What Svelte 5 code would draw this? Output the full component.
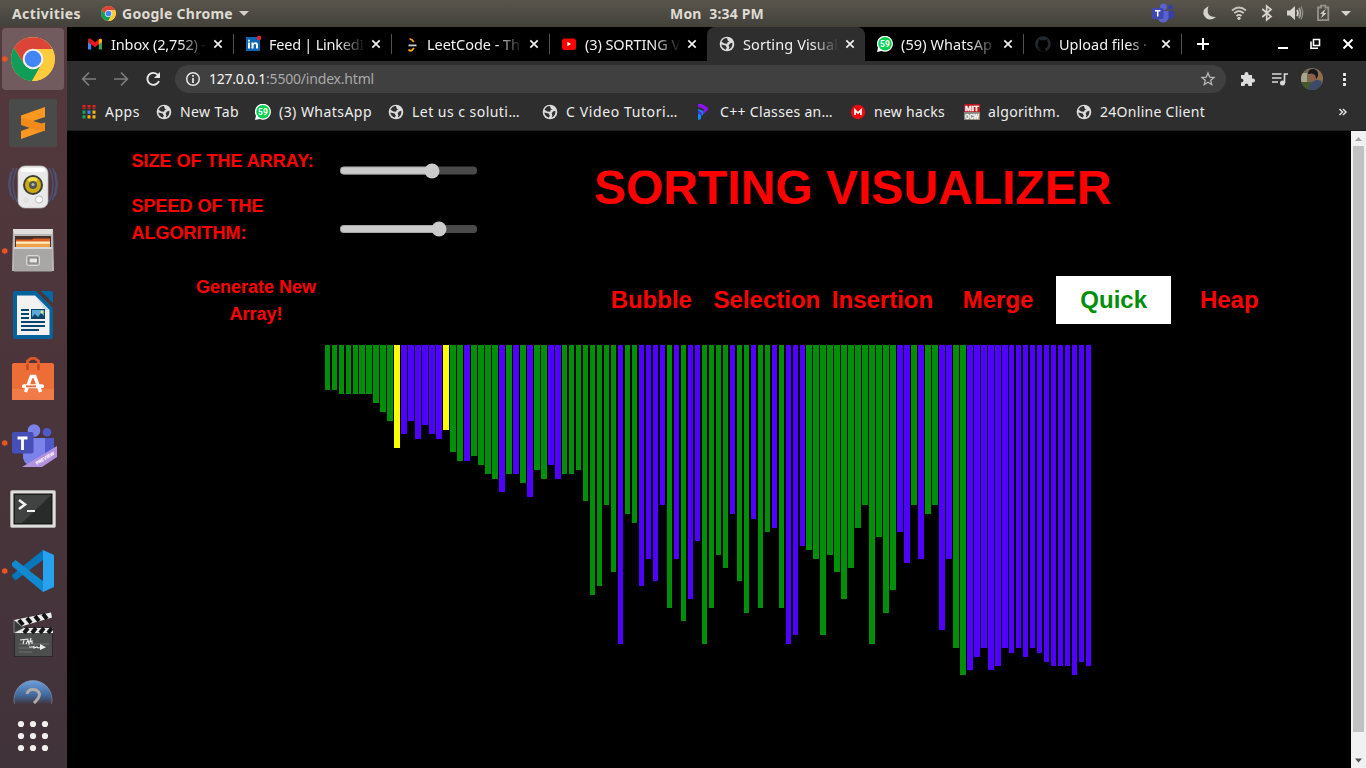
<script>
  // Spreads a label evenly over a given width.
  function fit(node, width) {
    node.style.letterSpacing = '0px';
    const natural = node.getBoundingClientRect().width;
    const count = node.textContent.length;
    node.style.letterSpacing = (width - natural) / count + 'px';
  }

  const tabs = [
    { icon: 'gmail', title: 'Inbox (2,752) -', width: 95 },
    { icon: 'linkedin', title: 'Feed | LinkedI', width: 95 },
    { icon: 'leetcode', title: 'LeetCode - Th', width: 93 },
    { icon: 'youtube', title: '(3) SORTING V', width: 95 },
    { icon: 'globe', title: 'Sorting Visual', width: 95, active: true },
    { icon: 'whatsapp', title: '(59) WhatsAp', width: 91 },
    { icon: 'github', title: 'Upload files ·', width: 88 }
  ];

  const bookmarks = [
    { icon: 'apps', title: 'Apps', width: 35, cell: 75 },
    { icon: 'globe', title: 'New Tab', width: 59, cell: 99 },
    { icon: 'whatsapp', title: '(3) WhatsApp', width: 93, cell: 133 },
    { icon: 'globe', title: 'Let us c soluti…', width: 108, cell: 154 },
    { icon: 'globe', title: 'C Video Tutori…', width: 112, cell: 154 },
    { icon: 'cpp', title: 'C++ Classes an…', width: 113, cell: 154 },
    { icon: 'mega', title: 'new hacks', width: 71, cell: 114 },
    { icon: 'mit', title: 'algorithm.', width: 72, cell: 112 },
    { icon: 'globe', title: '24Online Client', width: 105, cell: 150 }
  ];

  const dock = ['chrome', 'sublime', 'speaker', 'files', 'writer', 'software', 'teams', 'terminal', 'code', 'clapper'];
  const running = ['chrome', 'files', 'teams', 'code'];
  const algorithms = ['Bubble', 'Selection', 'Insertion', 'Merge', 'Quick', 'Heap'];

  const data =
    'g45 g45 g49 g49 g49 g49 g49 g58 g67 g76 y103 b89 b76 b94 b80 b89 b94 y85 g107 g116 b116 g111 g120 g129 g134 b147 g129 b129 g138 b152 g125 g134 b120 b134 ' +
    'g129 g129 g125 g156 g250 g241 g160 g227 b299 g169 g178 b241 b214 b236 b160 g263 b214 g276 b254 b196 g299 g263 g210 g223 b169 g236 g268 b174 g263 g187 b183 g263 b299 b290 b201 ' +
    'g205 g214 g290 g210 g227 g254 g223 g183 g160 g299 g192 g268 g245 b187 b218 g160 b214 g169 g160 b285 b214 g303 g330 ' +
    'b325 b312 b303 b325 b321 b303 b308 b303 b312 b303 b308 b317 b321 b321 b321 b330 b317 b321';
  const bars = data.split(' ').map((s) => ({ kind: s[0], height: +s.slice(1) }));
</script>

{#snippet chromeLogo(size)}
  <svg width={size} height={size} viewBox="-22 -22 44 44">
    <circle r="22" fill="#fdc93a" />
    <path d="M-19 -11A22 22 0 0 1 19.3 -10H0L-9 5Z" fill="#db4437" />
    <path d="M-19 -11A22 22 0 0 0 -1 22L9 5.5L0 10L-9 5Z" fill="#0f9d58" />
    <path d="M19.3 -10H0L10 2L-1 22A22 22 0 0 0 19.3 -10Z" fill="#fecb3d" />
    <circle r="10.3" fill="#f1f1f1" />
    <circle r="8.3" fill="#4285f4" />
  </svg>
{/snippet}

{#snippet icon(name)}
  {#if name === 'gmail'}
    <svg width="16" height="16" viewBox="0 0 16 16">
      <path d="M1 4.5V13.5H4.2V7Z" fill="#4285f4" />
      <path d="M15 4.5V13.5H11.8V7Z" fill="#34a853" />
      <path d="M1 4.5Q1 2.2 3.5 2.8L8 6.2 12.5 2.8Q15 2.2 15 4.5V6L8 11.2 1 6Z" fill="#ea1520" />
      <path d="M11.8 3.3Q15 1.5 15 4.5V6L11.8 8.4Z" fill="#fbbc04" />
      <path d="M1 5V3.8Q1.5 2.4 3 2.6L4.2 3.5V8.4L1 6Z" fill="#c5221f" />
    </svg>
  {:else if name === 'linkedin'}
    <svg width="16" height="16" viewBox="0 0 16 16">
      <path d="M1 1h14v14H1z" fill="#0a66b5" />
      <path d="M3 6.5h2v6H3zM3 3.7h2v1.8H3zM6.5 6.5h2v1Q9.2 6.3 10.8 6.3 13 6.3 13 9v3.5h-2V9.3Q11 8 10 8T8.6 9.3v3.2H6.5z" fill="#fff" />
      <circle cx="14" cy="2" r="2.2" fill="#ee1c25" />
    </svg>
  {:else if name === 'leetcode'}
    <svg width="16" height="16" viewBox="0 0 16 16" fill="none" stroke-width="1.8">
      <path d="M6.500 3.200Q8.500 2.600 10.800 6" stroke="#ffa116" />
      <path d="M5.500 13.500Q7 15.500 9 14.200L11 12" stroke="#ffa116" />
      <path d="M5.500 9.400h8" stroke="#ccc" />
    </svg>
  {:else if name === 'youtube'}
    <svg width="16" height="16" viewBox="0 0 16 16">
      <rect x="1" y="2.500" width="14" height="11.500" rx="2.500" fill="#f00" />
      <path d="M6.3 5.8V10.2L10 8Z" fill="#fff" />
    </svg>
  {:else if name === 'globe'}
    <svg width="16" height="16" viewBox="0 0 16 16">
      <circle cx="8" cy="8" r="7.300" fill="#dedede" />
      <path d="M8 2Q4 2.300 2.500 5.800L5.300 7.400 8.200 7.800 8.600 6.100 10.600 5.500 8.800 4.700Z" fill="#303030" />
      <path d="M2.300 8.600 6.700 9.600 7.800 11.700 6.800 13.700Q2.800 12.600 2.300 8.600ZM13.400 6.800 11 7.600 9.600 9.400 10.400 11.300 9.600 13.500Q13.800 12 13.400 6.800Z" fill="#303030" />
    </svg>
  {:else if name === 'whatsapp'}
    <svg width="16" height="16" viewBox="0 0 16 16">
      <path d="M0 16 1 11.8A8 8 0 1 1 4.5 15Z" fill="#fff" />
      <circle cx="8" cy="7.8" r="6.8" fill="#07d14f" />
      <text x="8" y="11" text-anchor="middle" font-family="Roboto, sans-serif" font-size="8.500" font-weight="700" fill="#fff">59</text>
    </svg>
  {:else if name === 'github'}
    <svg width="16" height="16" viewBox="0 0 16 16">
      <circle cx="8" cy="8" r="7.8" fill="#24292e" />
      <path d="M5.5 15.5V12.5Q2.8 11.5 2.8 8 2.8 6.5 3.8 5.6L3.7 3.2 6 4.2H10L12.3 3.2 12.2 5.6Q13.2 6.5 13.2 8 13.2 11.5 10.5 12.2V15.5Z" fill="#000" />
      <path d="M5.6 13.5Q3.8 13.8 3 11.8" stroke="#000" fill="none" />
    </svg>
  {:else if name === 'apps'}
    <svg width="16" height="16" viewBox="0 0 16 16">
      <path d="M1.5 1h3v4h-3zM6.5 1h3v4h-3z M11.5 1h3v4h-3z" fill="#e8231c" />
      <path d="M1.5 6.5h3v3.3h-3zM1.5 11.2h3v3.3h-3z" fill="#1da45c" />
      <path d="M6.5 6.5h3v3.3h-3z" fill="#4285f4" />
      <path d="M6.5 11.2h3v3.3h-3zM11.5 6.5h3v3.3h-3zM11.5 11.2h3v3.3h-3z" fill="#fbaf17" />
      <path d="M1 3.8h14" stroke="#2e2e2e" stroke-width=".8" />
    </svg>
  {:else if name === 'cpp'}
    <svg width="16" height="16" viewBox="0 0 16 16">
      <path d="M2 0H6L12 4V6L6 11V8L8.500 5.500 2 2.500Z" fill="#8b13f5" />
      <path d="M2 5 7 7V11L5 11.500V15L2 16Z" fill="#0b8df5" />
      <path d="M2 6 6 9V11.500L2 10Z" fill="#3a39d8" />
    </svg>
  {:else if name === 'mega'}
    <svg width="16" height="16" viewBox="0 0 16 16">
      <circle cx="8" cy="8" r="7.2" fill="#f00b12" />
      <path d="M5 11V6L8 9 11 6V11" fill="none" stroke="#fff" stroke-width="1.7" />
    </svg>
  {:else if name === 'mit'}
    <svg width="16" height="16" viewBox="0 0 16 16" font-family="Liberation Sans, sans-serif" font-weight="700" fill="#fff">
      <path d="M0 0h16v8H0z" fill="#b9151b" />
      <path d="M0 8h16v8H0z" fill="#89857b" />
      <text x="1" y="7" font-size="7.500" textLength="14" lengthAdjust="spacingAndGlyphs" stroke="#fff" stroke-width=".3">MIT</text>
      <text x="1" y="15" font-size="7" textLength="14" lengthAdjust="spacingAndGlyphs" stroke="#fff" stroke-width=".3">OCW</text>
    </svg>
  {/if}
{/snippet}

{#snippet dockArt(name)}
  {#if name === 'chrome'}
    <rect x="2" y="28" width="62" height="62" rx="4" fill="#725b5f" />
    <svg x="11" y="37" width="44" height="44">{@render chromeLogo(44)}</svg>
  {:else if name === 'sublime'}
    <rect x="9" y="99" width="48" height="48" rx="2" fill="#494b4b" />
    <path d="M45 107 21 115.500V125L45 117Z" fill="#ff9820" />
    <path d="M21 131 45 122.500V130.500L21 139Z" fill="#ff9820" />
    <path d="M21 117.500 45 124.500V131L36 130 21 125Z" fill="#f28a1a" />
  {:else if name === 'speaker'}
    <g fill="none" stroke="#4c5b85" stroke-width="1.500" opacity=".75">
      <path d="M17 168Q9 184 17 202M13.500 168Q6 184 13.500 200M11 172Q7 184 11 196M49 168Q57 184 49 202M52.500 168Q60 184 52.500 200M55 172Q59 184 55 196" />
    </g>
    <rect x="18" y="166" width="30" height="42" rx="7" fill="#e9e9e9" stroke="#bbb" stroke-width=".7" />
    <rect x="21" y="168" width="24" height="4" rx="2" fill="#fff" />
    <circle cx="33" cy="185" r="10" fill="#3e3e38" />
    <circle cx="33" cy="185" r="8" fill="#c9ab10" />
    <path d="M33 185 27 179.5A8 8 0 0 1 38 179Z" fill="#f0db49" />
    <circle cx="33" cy="185" r="4" fill="#535352" />
    <circle cx="33" cy="184.5" r="1.6" fill="#bbb" />
    <circle cx="39" cy="199.5" r="3.6" fill="#fff" stroke="#bbb" />
    <circle cx="26" cy="200" r="2" fill="none" stroke="#d9d9d9" />
  {:else if name === 'files'}
    <path d="M13 229H53L54 271H12Z" fill="#b9b8b6" />
    <path d="M13 229H53L52 234H14Z" fill="#dfdedc" />
    <path d="M15 236H51V247H15Z" fill="#46312b" />
    <path d="M16 241V239.500H32L33.500 238.500H50V248H16Z" fill="#dc6024" />
    <path d="M16 241.500H50V244H16Z" fill="#fff0c2" />
    <path d="M16 243.800H50V247H16Z" fill="#f0a048" />
    <path d="M14 247H52V271.5H14Z" fill="#a8a7a5" />
    <path d="M14 247H52V249H14Z" fill="#d9d8d6" />
    <rect x="26.5" y="255.500" width="13" height="10" rx="2" fill="#aaa" stroke="#dadada" />
    <rect x="29" y="258" width="8.5" height="5" fill="#e5e5e5" stroke="#666" stroke-width=".8" />
  {:else if name === 'writer'}
    <path d="M15 291H36L53 308V337Q53 339 51 339H15Q13 339 13 337V293Q13 291 15 291Z" fill="#04639b" />
    <path d="M41 291H51Q53 291 53 293V303Z" fill="#0369a3" />
    <path d="M17 295.5H35L49.5 310V335H17Z" fill="#f2f2f2" />
    <path d="M35 295.5 49.5 310H45Z" fill="#c7dce8" />
    <path d="M21 310H29M21 314H29M21 318H29M21 322H45M21 326H45M21 330H39" stroke="#08476d" stroke-width="1.8" />
    <path d="M31 309H45V319H31Z" fill="#0d4568" />
    <path d="M32 310H44V316L41 313 38 317 35 314 32 317Z" fill="#59aadb" />
    <circle cx="42" cy="312" r="1.5" fill="#fbe36b" />
  {:else if name === 'software'}
    <path d="M27.5 370V361L31 358.3H35L38.5 361V370" fill="none" stroke="#db5928" stroke-width="2.8" />
    <path d="M12 364 14 363H52L54 364V400H12Z" fill="#ec6d35" />
    <path d="M12 389H54V400H12Z" fill="#f17c48" />
    <path d="M27.5 364V370M38.5 364V370" stroke="#c94b1d" stroke-width="2.6" />
    <path d="M25.5 392 31.2 376.5H34.8L40.5 392" fill="none" stroke="#fff" stroke-width="3.4" />
    <path d="M24 386.3H42" stroke="#fff" stroke-width="4" stroke-linecap="round" />
    <path d="M26 386.3H36" stroke="#ec6d35" stroke-width="1.9" />
  {:else if name === 'teams'}
    <circle cx="34" cy="430.500" r="6.300" fill="#7b83eb" />
    <circle cx="47" cy="432.3" r="4.3" fill="#5059c9" />
    <path d="M43 438H54V451Q50 460 43 456Z" fill="#5059c9" />
    <path d="M23 438H45V456Q43 466 34 466 25 466 23 458Z" fill="#7b83eb" />
    <rect x="12" y="432" width="21.5" height="21.5" rx="1.8" fill="#464eb8" />
    <path d="M17.5 438H27.5M22.5 438V450" stroke="#fff" stroke-width="2.8" />
    <path d="M22 467 57 446V457L42 467Z" fill="#b292e0" />
    <text transform="translate(37 465) rotate(-31)" font-family="Inter, sans-serif" font-size="4.6" font-weight="800" fill="#fff" textLength="21">PREVIEW</text>
  {:else if name === 'terminal'}
    <rect x="10.5" y="490.5" width="45" height="37" rx="1.5" fill="#dededc" stroke="#aaa" />
    <rect x="14" y="494" width="38" height="30" fill="#292b2b" stroke="#111" />
    <path d="M15 495H51L22 523H15Z" fill="#414342" />
    <path d="M19 500 25 504.5 19 509" fill="none" stroke="#f1f1ef" stroke-width="2.6" />
    <path d="M27 511H35" stroke="#f1f1ef" stroke-width="2" />
  {:else if name === 'code'}
    <path d="M12 576.500 15.500 580.500 43 560V550L12 575Z" fill="#0876bb" />
    <path d="M12 563 15.5 560 43 581V592L12 566Z" fill="#1189cf" />
    <path d="M43 550 54 555V587L43 592Z" fill="#26a2ee" />
    <path d="M43 562 30 571 43 580.500Z" fill="#49343b" />
  {:else if name === 'clapper'}
    <path d="M14 620 51 612.500 52 617.500 16 628Z" fill="#ededed" />
    <path d="M19 620 23 625M27 618 31 623M35 616 39 621M43 614 47 619" stroke="#111" stroke-width="4" />
    <path d="M14.500 628H52.500V656.500H14.500Z" fill="#4c4e4d" stroke="#292b2b" />
    <path d="M15 628H53V633H15Z" fill="#eee" />
    <path d="M28 628 24 633M36 628 32 633M44 628 40 633M52 628 48 633" stroke="#171717" stroke-width="4" />
    <path d="M14 620V633L24 628Z" fill="#383a3a" stroke="#aaa" stroke-width=".6" />
    <path d="M19 644H49M19 648H35M19 652H32" stroke="#777" stroke-width=".8" />
    <path d="M20 640 28 639M24 640 23 644M26 644 28 640 29 644 31 638 30 642 32 641 32 644M29 647H33L34 646.500V648L37 647 38 648 44 647" stroke="#ededed" stroke-width="1.100" fill="none" />
    <path d="M40 644V650L46 647.200Z" fill="#ededed" />
  {/if}
{/snippet}

<div class="desktop">
  <header class="panel">
    <span class="activities"><b use:fit={69}>Activities</b></span>
    <span class="app-menu">
      {@render chromeLogo(15)}
      <b use:fit={111}>Google Chrome</b>
      <svg width="10" height="5" viewBox="0 0 10 5"><path d="M0 0H10L5 5Z" fill="#d5d1ca" /></svg>
    </span>
    <span class="clock"><b use:fit={94}>Mon&nbsp; 3:34 PM</b></span>
    <svg class="tray" width="216" height="27" viewBox="1150 0 216 27">
      <circle cx="1163.500" cy="6.800" r="3.400" fill="#5b62cf" />
      <circle cx="1170.500" cy="7.300" r="2.500" fill="#3840a7" />
      <path d="M1168 11H1174V17L1171 19H1168Z" fill="#373fa6" />
      <path d="M1158 11H1168.500V18Q1167 22.500 1163 22.500T1158 18Z" fill="#5b62cf" />
      <rect x="1152" y="8" width="11.500" height="11" rx="1" fill="#3f47b2" />
      <path d="M1155 10.800H1160.400M1157.700 10.800V16.500" stroke="#fff" stroke-width="1.500" />
      <path d="M1208.500 6Q1200 11 1205 17 1209.500 22 1216 17 1209 17 1207.800 12.500 1207.300 9 1208.500 6Z" fill="#d6d3cc" />
      <g fill="none" stroke="#d6d3cc" stroke-width="1.700">
        <path d="M1232 10.500Q1239 4.500 1246 10.500" stroke="#c5c2bc" />
        <path d="M1234.300 13.200Q1239 9.200 1243.700 13.200M1236.500 16Q1239 13.700 1241.500 16" />
        <path d="M1262.300 9 1271 16.500 1266.700 20V6L1271 9.500 1262.300 17" />
        <path d="M1297 10Q1299 13 1297 16" />
        <path d="M1299 8Q1302 13 1299 18" stroke="#aaa7a1" />
        <path d="M1301 6.500Q1304.500 13 1301 19.500" stroke="#8e8b84" stroke-width="1.300" />
      </g>
      <circle cx="1239" cy="18.300" r="1.600" fill="#d6d3cc" />
      <path d="M1287 10.500H1290L1295 6V20L1290 15.500H1287Z" fill="#d6d3cc" />
      <path d="M1318 7.500H1321V5.700H1325.500V7.500H1328.300V20.200H1318Z" fill="none" stroke="#97938c" stroke-width="1.800" />
      <path d="M1325.800 8.700 1320 13.800H1322.700L1321 18.300 1326.500 13H1323.700Z" fill="#d6d3cc" />
      <path d="M1341 11H1351L1346 16Z" fill="#d6d3cc" />
    </svg>
  </header>

  <div class="work">
    <nav class="dock">
      {#each dock as name, i}
        <svg class="dock-item" width="67" height="64" viewBox="0 {27 + 64 * i} 67 64">
          {@render dockArt(name)}
          {#if running.includes(name)}<circle cx="4.8" cy={59 + 64 * i} r="2.8" fill="#e95420" />{/if}
        </svg>
      {/each}
      <svg width="67" height="37" viewBox="0 667 67 37">
        <defs>
          <linearGradient id="help" x1="0" y1="0" x2="0" y2="1">
            <stop offset="0" stop-color="#6ba0db" />
            <stop offset=".4" stop-color="#3f6698" />
            <stop offset=".62" stop-color="#44343b" />
          </linearGradient>
        </defs>
        <circle cx="33" cy="699.500" r="19" fill="url(#help)" stroke="#b9c7d6" stroke-opacity=".35" />
        <path d="M27 694Q28 689.500 33 689.500T39.500 694Q39.500 698 34 703" fill="none" stroke="#b2aaa6" stroke-width="3" />
      </svg>
      <svg width="67" height="64" viewBox="0 704 67 64" fill="#f2f0ef">
        {#each [724, 736, 748] as y}
          {#each [21, 33, 45] as x}<circle cx={x} cy={y} r="3.100" />{/each}
        {/each}
      </svg>
    </nav>

    <main class="browser">
      <div class="tabs">
        {#each tabs as tab}
          <div class="tab" class:active={tab.active}>
            {@render icon(tab.icon)}
            <span class="tab-title"><span class="label" use:fit={tab.width}>{tab.title}</span></span>
            <svg class="close" width="16" height="16" viewBox="0 0 16 16"><path d="M4.300 4.300 11.700 11.700M11.700 4.300 4.300 11.700" stroke="#f0f0f0" stroke-width="1.700" /></svg>
          </div>
        {/each}
        <svg class="new-tab" width="34" height="34" viewBox="1181 27 34 34"><path d="M1181.500 34V54" stroke="#505050" /><path d="M1197 44H1209M1203 38V50" stroke="#fff" stroke-width="2" /></svg>
        <svg class="window-buttons" width="96" height="34" viewBox="1270 27 96 34" fill="none" stroke="#fff">
          <path d="M1278 48H1288" stroke-width="2" />
          <path d="M1313.500 39.500H1319.500V45.500H1313.500ZM1311 41.500V48.200H1318" stroke-width="1.600" />
          <path d="M1343.500 39.500 1352.500 48.500M1352.500 39.500 1343.500 48.500" stroke-width="2" />
        </svg>
      </div>

      <div class="toolbar">
        <svg width="108" height="36" viewBox="67 61 108 36" fill="none" stroke-width="1.700">
          <path d="M96 79H83M89 72.500 82.700 79 89 85.500M114 79H127M121 72.500 127.300 79 121 85.500" stroke="#7e7e7e" />
          <path d="M158 75A6 6 0 1 0 159 81" stroke="#e8e8e8" stroke-width="1.900" />
          <path d="M160 72V78H154Z" fill="#e8e8e8" />
        </svg>
        <div class="omnibox">
          <svg width="16" height="16" viewBox="0 0 16 16">
            <circle cx="8" cy="8" r="6.300" fill="none" stroke="#e8e8e8" stroke-width="1.500" />
            <path d="M8 7V12M8 4V5.800" stroke="#e8e8e8" stroke-width="1.700" />
          </svg>
          <span class="url"><span class="host" use:fit={57}>127.0.0.1</span><span class="path" use:fit={108}>:5500/index.html</span></span>
          <svg width="16" height="16" viewBox="0 0 16 16"><path d="M8 2 9.700 6.100 14 6.500 10.700 9.300 11.800 13.700 8 11.300 4.200 13.700 5.300 9.300 2 6.500 6.300 6.100Z" fill="none" stroke="#b8b8b8" stroke-width="1.300" /></svg>
        </div>
        <svg width="140" height="36" viewBox="1226 61 140 36">
          <path d="M1241 75H1244.500V74Q1244.500 72 1246.500 72T1248.500 74V75H1252V78.500H1253Q1255 78.500 1255 80.500T1253 82.500H1252V86H1248.500Q1248.500 83.500 1246.500 83.500T1244.500 86H1241V82.500Q1243.500 82.500 1243.500 80.500T1241 78.500Z" fill="#ddd" />
          <path d="M1272 74H1281.500M1272 78H1281.500M1272 82H1278M1284.500 83V74H1288" fill="none" stroke="#d9d9d9" stroke-width="1.700" />
          <circle cx="1282.500" cy="83" r="2.500" fill="#d9d9d9" />
          <clipPath id="avatar"><circle cx="1312" cy="79" r="11" /></clipPath>
          <g clip-path="url(#avatar)">
            <rect x="1301" y="68" width="22" height="22" fill="#766b56" />
            <path d="M1301 82H1312V90H1301Z" fill="#455a2c" />
            <path d="M1301 73H1307V82H1301Z" fill="#aaa48d" />
            <path d="M1317 68H1323V80H1317Z" fill="#8d6f49" />
            <path d="M1308 90 1311 83 1314 79 1321 81 1323 90Z" fill="#3d4968" />
            <path d="M1309 73H1316L1317 79 1313 82 1309.500 80Z" fill="#8f5f47" />
            <path d="M1308 74Q1308 69 1313.500 69 1319 70 1318 76L1316.500 79 1315 75 1312 73.500Z" fill="#17181c" />
          </g>
          <path d="M1344.500 73V76M1344.500 78V81M1344.500 83V86" stroke="#eee" stroke-width="2.800" />
        </svg>
      </div>

      <div class="bookmarks">
        {#each bookmarks as item}
          <div class="bookmark" style="width: {item.cell}px">
            {@render icon(item.icon)}
            <span class="label" use:fit={item.width}>{item.title}</span>
          </div>
        {/each}
        <svg class="more" width="10" height="10" viewBox="0 0 10 10"><path d="M1.500 2 4.500 5 1.500 8M5 2 8 5 5 8" fill="none" stroke="#ddd" stroke-width="1.500" /></svg>
      </div>

      <div class="viewport">
        <div class="page">
          <section class="head">
            <div class="settings">
              <div class="setting">
                <p>SIZE OF THE ARRAY:</p>
                <svg width="138" height="16" viewBox="0 0 138 16">
                  <rect x="0" y="3.600" width="137" height="8" rx="3.600" fill="#4a4a4a" />
                  <rect x=".5" y="4.100" width="96" height="7" rx="3.300" fill="#cbcbcb" stroke="#aaa" />
                  <circle cx="92" cy="8" r="7.500" fill="#cbcbcb" />
                </svg>
              </div>
              <div class="setting second">
                <p>SPEED OF THE ALGORITHM:</p>
                <svg width="138" height="16" viewBox="0 0 138 16">
                  <rect x="0" y="4" width="137" height="8" rx="3.600" fill="#4a4a4a" />
                  <rect x=".5" y="4.500" width="102" height="7" rx="3.300" fill="#cbcbcb" stroke="#aaa" />
                  <circle cx="99" cy="8" r="7.500" fill="#cbcbcb" />
                </svg>
              </div>
            </div>
            <h1>SORTING VISUALIZER</h1>
          </section>

          <section class="actions">
            <button class="generate">Generate New Array!</button>
            <div class="algorithms">
              {#each algorithms as name}
                <button class="algorithm" class:selected={name === 'Quick'}>{name}</button>
              {/each}
            </div>
          </section>

          <section class="bars">
            {#each bars as bar}
              <div class="bar {bar.kind}" style="height: {bar.height}px"></div>
            {/each}
          </section>
        </div>
        <div class="scrollbar">
          <svg width="15" height="15" viewBox="0 0 15 15"><path d="M4 10H11L7.500 6Z" fill="#a3a3a3" /></svg>
          <div class="thumb"></div>
          <svg width="15" height="15" viewBox="0 0 15 15"><path d="M4 5.500H11L7.500 9.500Z" fill="#505050" /></svg>
        </div>
      </div>
    </main>
  </div>
</div>

<style>
  :global(body) { background: #000; overflow: hidden; }
  .desktop { width: 1366px; height: 768px; overflow: hidden; display: flex; flex-direction: column; font-family: "Noto Sans", "Open Sans", sans-serif; }
  svg { display: block; flex: none; }
  b, .label, .host, .path { display: inline-block; white-space: pre; }
  .panel { height: 27px; flex: none; display: flex; align-items: center; background: linear-gradient(#59554c, #42413b); color: #dfdbd2; font-size: 14px; line-height: 27px; }
  .activities { width: 89px; padding-left: 12px; flex: none; }
  .app-menu { width: 569px; flex: none; display: flex; align-items: center; gap: 6px; }
  .clock { flex: 1; }
  .work { flex: 1; display: flex; min-height: 0; }
  .dock { width: 67px; flex: none; display: flex; flex-direction: column; background: linear-gradient(#54393d, #4b353b 45%, #41333a); }
  .browser { flex: 1; min-width: 0; display: flex; flex-direction: column; }

  .tabs { height: 34px; flex: none; display: flex; align-items: center; padding-left: 8px; background: #000; color: #f1f1f1; font-size: 14.500px; }
  .tab { width: 158px; height: 34px; flex: none; box-sizing: border-box; display: flex; align-items: center; padding-left: 12px; }
  .tab + .tab:not(.active) { background: linear-gradient(#505050, #505050) 0 50% / 1px 20px no-repeat; }
  .active + .tab:not(.active) { background: none; }
  .tab.active { background: #2e2e2e; border-radius: 8px 8px 0 0; }
  .tab-title { width: 96px; margin-left: 8px; overflow: hidden; line-height: 22px; padding-bottom: 1px; mask-image: linear-gradient(90deg, #000 72%, transparent 100%); }
  .close { margin-left: 3px; }
  .window-buttons { margin-left: auto; }

  .toolbar { height: 36px; flex: none; display: flex; align-items: center; background: #2e2e2e; }
  .omnibox { flex: 1; height: 28px; display: flex; align-items: center; padding: 0 10px; border-radius: 14px; background: #404040; font-size: 14px; }
  .url { flex: 1; margin-left: 8px; line-height: 20px; color: #a9a9a9; }
  .host { color: #f5f5f5; }
  .bookmarks { height: 34px; flex: none; box-sizing: border-box; display: flex; align-items: center; padding: 0 18px 4px 14px; background: #2e2e2e; border-bottom: 1px solid #202020; color: #eee; font-size: 14px; }
  .bookmark { flex: none; display: flex; align-items: center; gap: 8px; line-height: 20px; }
  .more { margin-left: auto; }

  .viewport { flex: 1; min-height: 0; display: flex; background: #000; }
  .page { flex: 1; font-family: "Liberation Sans", Arial, sans-serif; font-weight: 700; color: #f00; }
  .head { height: 145px; display: flex; }
  .settings { width: 527px; flex: none; box-sizing: border-box; padding: 17px 0 0 64.500px; }
  .setting { display: flex; }
  .setting p { width: 208.500px; margin: 0; font-size: 18px; line-height: 27px; padding-right: 20px; box-sizing: border-box; }
  .setting svg { margin-top: 15px; }
  .setting.second { margin-top: 14px; }
  .setting.second svg { margin-top: 28px; }
  h1 { margin: 21px 0 0; font-size: 48px; line-height: 72px; height: 72px; white-space: nowrap; }
  .actions { height: 69px; display: flex; align-items: flex-start; }
  button { border: 0; padding: 0; margin: 0; background: none; font: inherit; color: inherit; }
  .generate { width: 128px; margin: -2px 270px 0 125px; font-size: 18px; line-height: 27px; }
  .algorithms { display: grid; grid-template-columns: repeat(6, 115.600px); margin-left: 3.500px; }
  .algorithm { height: 48px; font-size: 24px; line-height: 48px; width: 115.600px; display: flex; justify-content: center; }
  .selected { background: #fff; color: #008f08; }
  .bars { display: flex; align-items: flex-start; gap: 1.53125px; padding-left: 257.5625px; }
  .bar { width: 5.453125px; flex: none; }
  .g { background: #008f08; }
  .b { background: #5000ff; }
  .y { background: #fbff00; }
  .scrollbar { width: 15px; flex: none; display: flex; flex-direction: column; background: #f1f1f1; }
  .thumb { flex: none; height: 586px; margin: 0 2px; background: #c1c1c1; }
  .scrollbar svg:last-child { margin-top: auto; }
</style>
